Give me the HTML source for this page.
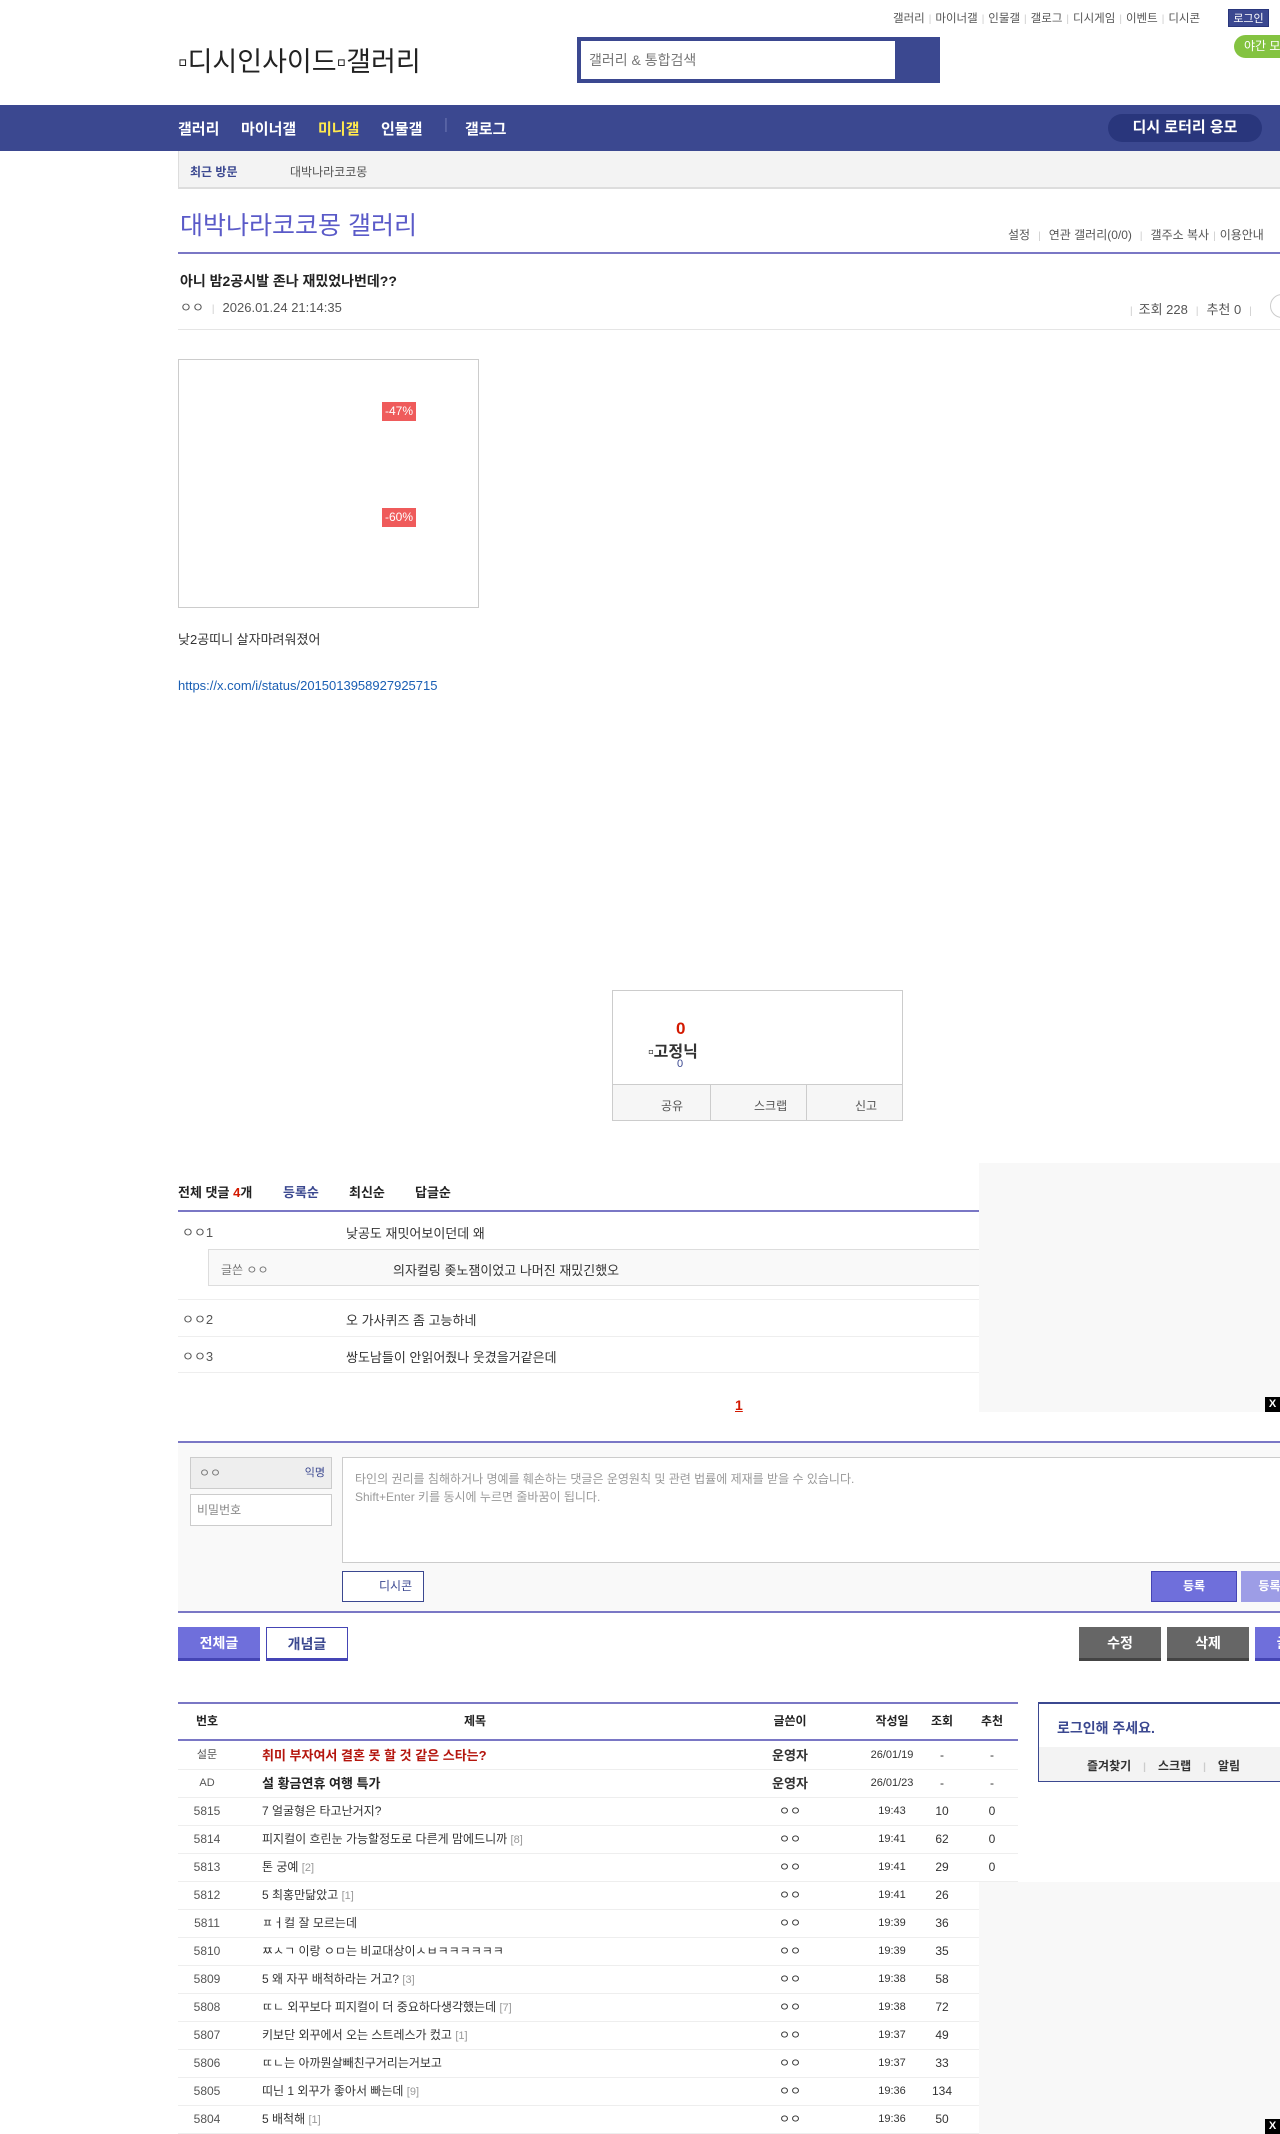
<!DOCTYPE html>
<html><head><meta charset="utf-8">
<style>
*{margin:0;padding:0;box-sizing:border-box}
body{width:1280px;height:2134px;overflow:hidden;position:relative;background:#fff;font-family:"Liberation Sans","Noto Sans CJK KR",sans-serif;font-size:13px;color:#333}
.a{position:absolute;white-space:nowrap}
.top a{color:#555;font-size:11.5px}
.sep{color:#ccc;margin:0 4px;font-size:10px}
.nav span{position:absolute;top:13px;color:#fff;font-weight:bold;font-size:15px}
.row{position:absolute;left:178px;width:840px;height:28px;border-bottom:1px solid #eee;font-size:12px}
.row div{position:absolute;top:0;line-height:27px;white-space:nowrap}
.c1{left:0;width:58px;text-align:center;color:#555}
.c2{left:84px}
.c3{left:570px;width:84px;text-align:center}
.c4{left:686px;width:56px;text-align:center;font-size:11px}
.c5{left:744px;width:40px;text-align:center}
.c6{left:794px;width:40px;text-align:center}
.rc{color:#999;font-size:11px}
.btn{position:absolute;height:34px;text-align:center;line-height:32px;font-weight:bold;font-size:14px}
</style></head><body>
<div class="a top" style="left:893px;top:10px">
<a>갤러리</a><span class="sep">|</span><a>마이너갤</a><span class="sep">|</span><a>인물갤</a><span class="sep">|</span><a>갤로그</a><span class="sep">|</span><a>디시게임</a><span class="sep">|</span><a>이벤트</a><span class="sep">|</span><a>디시콘</a>
</div>
<div class="a" style="left:1228px;top:9px;width:41px;height:18px;background:#3b4890;color:#fff;font-size:11px;text-align:center;line-height:18px;border:1px solid #29367c">로그인</div>
<div class="a" style="left:1234px;top:35px;width:60px;height:23px;background:#84c341;border-radius:12px;color:#fff;font-size:12px;line-height:23px;padding-left:10px">야간 모드</div>
<div class="a" style="left:178px;top:40px;font-size:27px;color:#222">▫디시인사이드▫갤러리</div>
<div class="a" style="left:577px;top:37px;width:363px;height:46px;background:#3b4890"></div>
<div class="a" style="left:581px;top:41px;width:314px;height:38px;background:#fff;font-size:14px;color:#777;line-height:38px;padding-left:8px">갤러리 &amp; 통합검색</div>
<div class="a nav" style="left:0;top:105px;width:1280px;height:46px;background:#3b4890">
<span style="left:178px">갤러리</span><span style="left:241px">마이너갤</span><span style="left:318px;color:#ffe94d">미니갤</span><span style="left:381px">인물갤</span><span style="left:444px;top:11px;color:#6872b0;font-weight:normal">|</span><span style="left:465px">갤로그</span>
<div class="a" style="left:1108px;top:9px;width:154px;height:28px;background:#29367c;border-radius:14px;color:#fff;font-weight:bold;font-size:15px;text-align:center;line-height:28px">디시 로터리 응모</div>
</div>
<div class="a" style="left:178px;top:151px;width:1102px;height:38px;background:#f3f3f3;border-bottom:2px solid #ddd;border-left:1px solid #ddd"></div>
<div class="a" style="left:190px;top:163px;font-size:12px;font-weight:bold;color:#3b4890">최근 방문</div>
<div class="a" style="left:290px;top:163px;font-size:12px;color:#555">대박나라코코몽</div>
<div class="a" style="left:180px;top:206px;font-size:25px;color:#5a5ac8">대박나라코코몽 갤러리</div>
<div class="a" style="left:1008px;top:226px;font-size:12px;color:#555">설정<span class="sep" style="margin:0 8px">|</span>연관 갤러리(0/0)<span class="sep" style="margin:0 8px">|</span>갤주소 복사<span class="sep">|</span>이용안내</div>
<div class="a" style="left:178px;top:252px;width:1102px;height:2px;background:#7a77c5"></div>
<div class="a" style="left:180px;top:271px;font-size:14px;font-weight:bold;color:#222">아니 밤2공시발 존나 재밌었나번데??</div>
<div class="a" style="left:180px;top:297px;font-size:13px;color:#555">ㅇㅇ<span class="sep" style="margin:0 8px">|</span>2026.01.24 21:14:35</div>
<div class="a" style="left:1124px;top:299px;font-size:13px;color:#555"><span class="sep" style="margin:0 6px">|</span>조회 228<span class="sep" style="margin:0 8px">|</span>추천 0<span class="sep" style="margin:0 8px">|</span></div>
<div class="a" style="left:1270px;top:294px;width:30px;height:24px;border:1px solid #ccc;border-radius:12px"></div>
<div class="a" style="left:178px;top:329px;width:1102px;height:1px;background:#e5e5e5"></div>
<div class="a" style="left:178px;top:359px;width:301px;height:249px;border:1px solid #ccc"></div>
<div class="a" style="left:382px;top:402px;width:34px;height:19px;background:#ef5b5b;color:#fff;font-size:12px;text-align:center;line-height:19px">-47%</div>
<div class="a" style="left:382px;top:508px;width:34px;height:19px;background:#ef5b5b;color:#fff;font-size:12px;text-align:center;line-height:19px">-60%</div>
<div class="a" style="left:178px;top:629px;font-size:13px;color:#333">낮2공띠니 살자마려워졌어</div>
<div class="a" style="left:178px;top:678px;font-size:13px;color:#1a5fb4">https://x.com/i/status/2015013958927925715</div>
<div class="a" style="left:612px;top:990px;width:291px;height:131px;border:1px solid #ccc"></div>
<div class="a" style="left:676px;top:1019px;font-size:17px;font-weight:bold;color:#d31900">0</div>
<div class="a" style="left:648px;top:1038px;font-size:16px;font-weight:bold;color:#333">▫고정닉</div>
<div class="a" style="left:677px;top:1058px;font-size:11px;color:#3b4890">0</div>
<div class="a" style="left:613px;top:1084px;width:289px;height:36px;background:#f6f6f6;border-top:1px solid #ccc"></div>
<div class="a" style="left:710px;top:1084px;width:1px;height:36px;background:#ccc"></div>
<div class="a" style="left:806px;top:1084px;width:1px;height:36px;background:#ccc"></div>
<div class="a" style="left:661px;top:1097px;font-size:12px;color:#555">공유</div>
<div class="a" style="left:754px;top:1097px;font-size:12px;color:#555">스크랩</div>
<div class="a" style="left:855px;top:1097px;font-size:12px;color:#555">신고</div>

<div class="a" style="left:178px;top:1182px;font-size:13px;font-weight:bold;color:#222">전체 댓글 <span style="color:#d31900">4</span>개</div>
<div class="a" style="left:283px;top:1182px;font-size:13px;font-weight:bold;color:#3b4890">등록순</div>
<div class="a" style="left:349px;top:1182px;font-size:13px;font-weight:bold;color:#222">최신순</div>
<div class="a" style="left:415px;top:1182px;font-size:13px;font-weight:bold;color:#222">답글순</div>
<div class="a" style="left:178px;top:1210px;width:1102px;height:2px;background:#7a77c5"></div>
<div class="a" style="left:182px;top:1222px;font-size:13px;color:#555">ㅇㅇ1</div>
<div class="a" style="left:346px;top:1223px;font-size:13px">낮공도 재밋어보이던데 왜</div>
<div class="a" style="left:208px;top:1249px;width:1072px;height:37px;background:#f9f9f9;border:1px solid #ddd"></div>
<div class="a" style="left:221px;top:1261px;font-size:12px;color:#777">글쓴 ㅇㅇ</div>
<div class="a" style="left:393px;top:1260px;font-size:13px">의자컬링 좆노잼이었고 나머진 재밌긴했오</div>
<div class="a" style="left:178px;top:1299px;width:1102px;height:1px;background:#eee"></div>
<div class="a" style="left:182px;top:1309px;font-size:13px;color:#555">ㅇㅇ2</div>
<div class="a" style="left:346px;top:1310px;font-size:13px">오 가사퀴즈 좀 고능하네</div>
<div class="a" style="left:178px;top:1336px;width:1102px;height:1px;background:#eee"></div>
<div class="a" style="left:182px;top:1346px;font-size:13px;color:#555">ㅇㅇ3</div>
<div class="a" style="left:346px;top:1347px;font-size:13px">쌍도남들이 안읽어줬나 웃겼을거같은데</div>
<div class="a" style="left:178px;top:1372px;width:1102px;height:1px;background:#eee"></div>
<div class="a" style="left:735px;top:1397px;font-size:14px;font-weight:bold;color:#d31900;text-decoration:underline">1</div>
<div class="a" style="left:979px;top:1163px;width:301px;height:249px;background:#f8f8f8"></div>
<div class="a" style="left:1265px;top:1397px;width:15px;height:15px;background:#000;color:#fff;font-size:11px;font-weight:bold;text-align:center;line-height:15px">X</div>

<div class="a" style="left:178px;top:1441px;width:1102px;height:172px;background:#f9f9f9;border-top:2px solid #7a77c5;border-bottom:2px solid #7a77c5"></div>
<div class="a" style="left:190px;top:1457px;width:142px;height:32px;background:#eee;border:1px solid #ccc;font-size:12px;color:#777;line-height:30px;padding-left:8px">ㅇㅇ<span style="position:absolute;right:6px;color:#3b4890;font-size:11px">익명</span></div>
<div class="a" style="left:190px;top:1494px;width:142px;height:32px;background:#fff;border:1px solid #ccc;font-size:12px;color:#888;line-height:30px;padding-left:6px">비밀번호</div>
<div class="a" style="left:342px;top:1457px;width:960px;height:106px;background:#fff;border:1px solid #ccc;font-size:12px;color:#999;padding:12px 12px;line-height:18px">타인의 권리를 침해하거나 명예를 훼손하는 댓글은 운영원칙 및 관련 법률에 제재를 받을 수 있습니다.<br>Shift+Enter 키를 동시에 누르면 줄바꿈이 됩니다.</div>
<div class="a" style="left:342px;top:1571px;width:82px;height:31px;background:#fff;border:1px solid #3b4890;font-size:12px;color:#3b4890;line-height:29px;padding-left:36px">디시콘</div>
<div class="a" style="left:1151px;top:1571px;width:86px;height:31px;background:#6f6fdb;border:1px solid #4545b5;color:#fff;font-size:12px;font-weight:bold;text-align:center;line-height:29px">등록</div>
<div class="a" style="left:1241px;top:1571px;width:86px;height:31px;background:#9d9de6;color:#fff;font-size:12px;font-weight:bold;text-align:center;line-height:31px">등록+추천</div>

<div class="btn" style="left:178px;top:1627px;width:82px;background:#6f6fdb;color:#fff;border-bottom:3px solid #4545b5">전체글</div>
<div class="btn" style="left:266px;top:1627px;width:82px;background:#fff;color:#3b4890;border:1px solid #4545b5;border-bottom:3px solid #4545b5">개념글</div>
<div class="btn" style="left:1079px;top:1627px;width:82px;background:#666;color:#fff;border-bottom:3px solid #444">수정</div>
<div class="btn" style="left:1167px;top:1627px;width:82px;background:#666;color:#fff;border-bottom:3px solid #444">삭제</div>
<div class="btn" style="left:1255px;top:1627px;width:82px;background:#6f6fdb;color:#fff;border-bottom:3px solid #4545b5">글쓰기</div>

<div class="a" style="left:178px;top:1702px;width:840px;height:2px;background:#7a77c5"></div>
<div class="row" style="top:1704px;height:37px;border-bottom:2px solid #7a77c5;font-weight:bold;font-size:12px;color:#222">
<div class="c1" style="line-height:35px;color:#222">번호</div><div style="left:286px;line-height:35px">제목</div><div class="c3" style="line-height:35px">글쓴이</div><div class="c4" style="line-height:35px;font-size:12px">작성일</div><div class="c5" style="line-height:35px">조회</div><div class="c6" style="line-height:35px">추천</div></div>
<div class="row" style="top:1742px"><div class="c1" style="font-size:11px">설문</div><div class="c2" style="color:#b4150d;font-weight:bold;font-size:13px">취미 부자여서 결혼 못 할 것 같은 스타는?</div><div class="c3" style="font-weight:bold;font-size:13px">운영자</div><div class="c4">26/01/19</div><div class="c5">-</div><div class="c6">-</div></div>
<div class="row" style="top:1770px"><div class="c1" style="font-size:11px">AD</div><div class="c2" style="font-weight:bold;font-size:13px;color:#222">설 황금연휴 여행 특가</div><div class="c3" style="font-weight:bold;font-size:13px">운영자</div><div class="c4">26/01/23</div><div class="c5">-</div><div class="c6">-</div></div>
<div class="row" style="top:1798px"><div class="c1">5815</div><div class="c2">7 얼굴형은 타고난거지?</div><div class="c3">ㅇㅇ</div><div class="c4">19:43</div><div class="c5">10</div><div class="c6">0</div></div>
<div class="row" style="top:1826px"><div class="c1">5814</div><div class="c2">피지컬이 흐린눈 가능할정도로 다른게 맘에드니까 <span class="rc">[8]</span></div><div class="c3">ㅇㅇ</div><div class="c4">19:41</div><div class="c5">62</div><div class="c6">0</div></div>
<div class="row" style="top:1854px"><div class="c1">5813</div><div class="c2">톤 궁예 <span class="rc">[2]</span></div><div class="c3">ㅇㅇ</div><div class="c4">19:41</div><div class="c5">29</div><div class="c6">0</div></div>
<div class="row" style="top:1882px"><div class="c1">5812</div><div class="c2">5 최홍만닮았고 <span class="rc">[1]</span></div><div class="c3">ㅇㅇ</div><div class="c4">19:41</div><div class="c5">26</div><div class="c6">0</div></div>
<div class="row" style="top:1910px"><div class="c1">5811</div><div class="c2">ㅍㅓ컬 잘 모르는데</div><div class="c3">ㅇㅇ</div><div class="c4">19:39</div><div class="c5">36</div><div class="c6">0</div></div>
<div class="row" style="top:1938px"><div class="c1">5810</div><div class="c2">ㅉㅅㄱ 이랑 ㅇㅁ는 비교대상이ㅅㅂㅋㅋㅋㅋㅋㅋ</div><div class="c3">ㅇㅇ</div><div class="c4">19:39</div><div class="c5">35</div><div class="c6">0</div></div>
<div class="row" style="top:1966px"><div class="c1">5809</div><div class="c2">5 왜 자꾸 배척하라는 거고? <span class="rc">[3]</span></div><div class="c3">ㅇㅇ</div><div class="c4">19:38</div><div class="c5">58</div><div class="c6">0</div></div>
<div class="row" style="top:1994px"><div class="c1">5808</div><div class="c2">ㄸㄴ 외꾸보다 피지컬이 더 중요하다생각했는데 <span class="rc">[7]</span></div><div class="c3">ㅇㅇ</div><div class="c4">19:38</div><div class="c5">72</div><div class="c6">0</div></div>
<div class="row" style="top:2022px"><div class="c1">5807</div><div class="c2">키보단 외꾸에서 오는 스트레스가 컸고 <span class="rc">[1]</span></div><div class="c3">ㅇㅇ</div><div class="c4">19:37</div><div class="c5">49</div><div class="c6">0</div></div>
<div class="row" style="top:2050px"><div class="c1">5806</div><div class="c2">ㄸㄴ는 아까뭔살빼친구거리는거보고</div><div class="c3">ㅇㅇ</div><div class="c4">19:37</div><div class="c5">33</div><div class="c6">0</div></div>
<div class="row" style="top:2078px"><div class="c1">5805</div><div class="c2">띠닌 1 외꾸가 좋아서 빠는데 <span class="rc">[9]</span></div><div class="c3">ㅇㅇ</div><div class="c4">19:36</div><div class="c5">134</div><div class="c6">0</div></div>
<div class="row" style="top:2106px"><div class="c1">5804</div><div class="c2">5 배척해 <span class="rc">[1]</span></div><div class="c3">ㅇㅇ</div><div class="c4">19:36</div><div class="c5">50</div><div class="c6">0</div></div>

<div class="a" style="left:1038px;top:1702px;width:260px;height:80px;border:1px solid #3b4890;border-top:2px solid #3b4890;background:#fff"></div>
<div class="a" style="left:1057px;top:1718px;font-size:14px;font-weight:bold;color:#3b4890">로그인해 주세요.</div>
<div class="a" style="left:1039px;top:1747px;width:241px;height:34px;background:#f3f3f3"></div>
<div class="a" style="left:1087px;top:1757px;font-size:12px;font-weight:bold;color:#333">즐겨찾기<span class="sep" style="margin:0 12px">|</span>스크랩<span class="sep" style="margin:0 12px">|</span>알림</div>
<div class="a" style="left:979px;top:1882px;width:301px;height:252px;background:#f8f8f8"></div>
<div class="a" style="left:1265px;top:2119px;width:15px;height:15px;background:#000;color:#fff;font-size:11px;font-weight:bold;text-align:center;line-height:15px">X</div>
</body></html>
